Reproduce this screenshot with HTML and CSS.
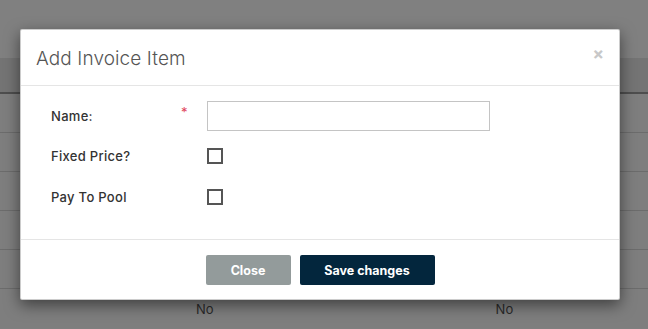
FILE: index.html
```html
<!DOCTYPE html>
<html>
<head>
<meta charset="utf-8">
<link rel="stylesheet" href="styles.css">
</head>
<body>
<div class="page">
  <div class="top"></div>
  <div class="thead"></div>
  <div class="row"></div>
  <div class="row"></div>
  <div class="row"></div>
  <div class="row"></div>
  <div class="row"></div>
  <div class="row last"><span class="cell c1">No</span><span class="cell c2">No</span></div>
</div>
<div class="modal">
  <div class="modal-header">
    <h4 class="modal-title">Add Invoice Item</h4>
    <span class="close-x">×</span>
  </div>
  <div class="modal-body">
    <div class="form-row">
      <label class="lbl">Name:</label>
      <span class="req">*</span>
      <input class="text-input" type="text">
    </div>
    <div class="form-row">
      <label class="lbl">Fixed Price?</label>
      <span class="req"></span>
      <span class="checkbox"></span>
    </div>
    <div class="form-row">
      <label class="lbl">Pay To Pool</label>
      <span class="req"></span>
      <span class="checkbox"></span>
    </div>
  </div>
  <div class="modal-footer">
    <button class="btn btn-close">Close</button>
    <button class="btn btn-save">Save changes</button>
  </div>
</div>
</body>
</html>
```
FILE: styles.css
```css
* { box-sizing: border-box; }
html, body { margin: 0; padding: 0; }
body {
  width: 648px;
  height: 329px;
  overflow: hidden;
  background: #7f7f7f;
  font-family: "Inter", "Open Sans", sans-serif;
  position: relative;
}
.page { display: flex; flex-direction: column; }
.top { height: 58px; background: #808080; }
.thead { height: 36px; background: #747474; border-bottom: 2px solid #4e4e4e; }
.row { height: 39px; border-bottom: 1px solid #6c6c6c; background: #7e7e7e; }
.row.last { border-bottom: none; position: relative; display: flex; align-items: flex-start; }
.cell { color: #2a2a2a; font-size: 13px; font-family: "Inter", sans-serif; }
.c1 { margin-left: 196px; margin-top: 12px; }
.c2 { margin-left: 282px; margin-top: 12px; }

.modal {
  position: absolute;
  left: 20px;
  top: 29px;
  width: 600px;
  height: 271px;
  background: #fff;
  border: 1px solid rgba(0,0,0,0.2);
  border-radius: 2px;
  box-shadow: 0 5px 15px rgba(0,0,0,0.5);
  display: flex;
  flex-direction: column;
}
.modal-header {
  height: 56px;
  border-bottom: 1px solid #e5e5e5;
  display: flex;
  align-items: center;
  justify-content: space-between;
  padding: 1px 15px 0 15px;
}
.modal-title {
  margin: 0;
  font-weight: 300;
  font-size: 19px;
  color: #555;
  letter-spacing: 0.1px;
}
.close-x {
  color: #c8c8c8;
  font-size: 17px;
  font-weight: 700;
  line-height: 1;
  margin-top: -8px;
  margin-right: 0;
}
.modal-body {
  height: 154px;
  padding: 15px 0 0 30px;
  display: flex;
  flex-direction: column;
  border-bottom: 1px solid #e5e5e5;
}
.form-row {
  display: flex;
  align-items: center;
  height: 30px;
  margin-bottom: 10px;
}
.form-row + .form-row { height: 30px; margin-bottom: 11px; }
.lbl {
  width: 132px;
  font-size: 13px;
  font-weight: 500;
  color: #333;
  letter-spacing: 0.3px;
}
.req {
  width: 24px;
  color: #e0445c;
  font-size: 13px;
  align-self: flex-start;
  margin-top: 3px;
  margin-left: -2px;
  margin-right: 2px;
}
.text-input {
  width: 283px;
  height: 30px;
  border: 1px solid #c4c4c4;
  border-radius: 0;
  padding: 0;
  margin: 0;
}
.checkbox {
  width: 16px;
  height: 16px;
  border: 2px solid #555;
  display: block;
  margin-top: -1px;
}
.modal-footer {
  flex: 1;
  display: flex;
  justify-content: center;
  align-items: flex-start;
  padding-top: 15px;
  gap: 9px;
}
.btn {
  height: 30px;
  border: none;
  border-radius: 2px;
  color: #fff;
  font-family: "Inter", sans-serif;
  font-weight: 700;
  font-size: 12.5px;
  padding: 0;
}
.btn-close { width: 85px; background: #939b9b; }
.btn-save { width: 135px; background: #03263d; }
```
